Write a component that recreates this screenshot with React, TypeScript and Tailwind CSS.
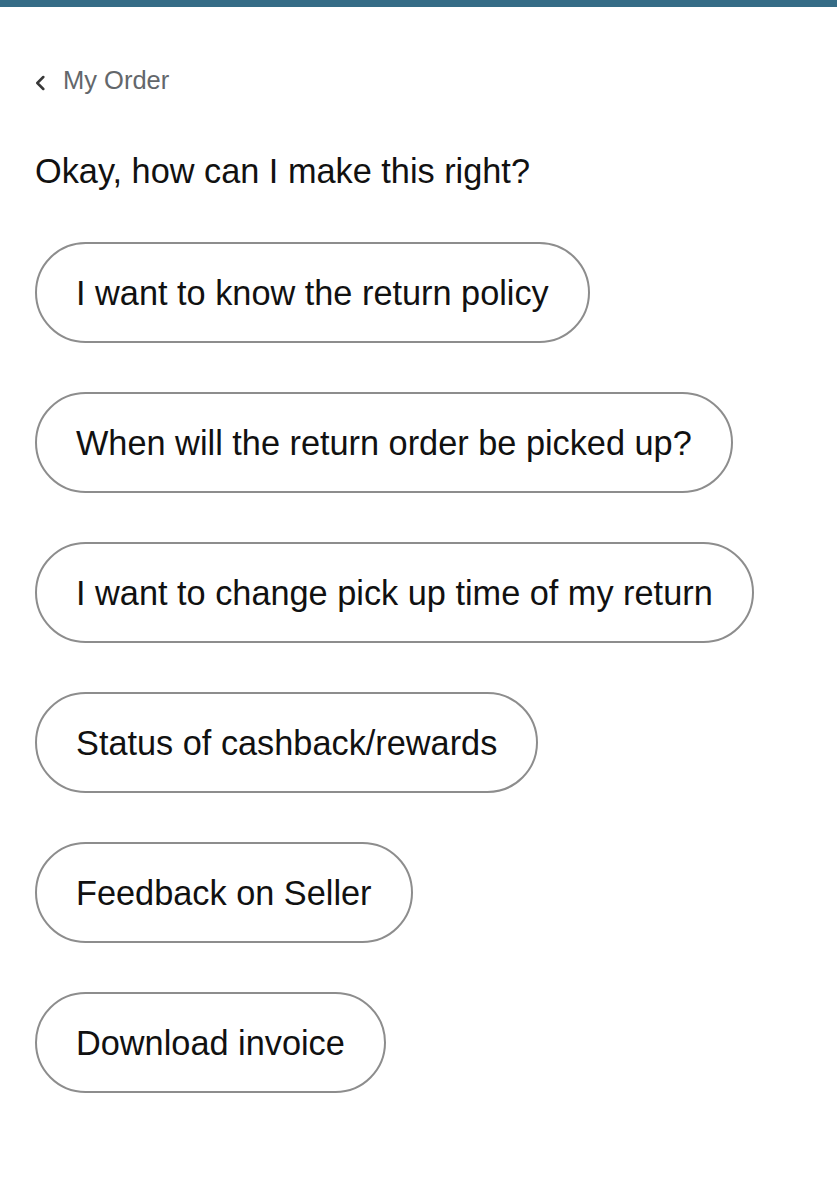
import React from "react";

const options = [
  "I want to know the return policy",
  "When will the return order be picked up?",
  "I want to change pick up time of my return",
  "Status of cashback/rewards",
  "Feedback on Seller",
  "Download invoice",
];

export default function App() {
  return (
    <div className="min-h-[1200px] w-[837px] bg-white font-['Liberation_Sans',Arial,sans-serif]">
      <div className="h-[7px] bg-[#356c86]" />
      <div className="pl-[35px]">
        <div className="mt-[58px] flex h-[30px] items-center gap-[18px]">
          <svg width="10" height="16" viewBox="0 0 10 16" className="mt-[6px]">
            <path d="M8.3 2 L2.3 8 L8.3 14" fill="none" stroke="#383838" strokeWidth="2.5" strokeLinecap="round" strokeLinejoin="round" />
          </svg>
          <span className="text-[25.5px] leading-[30px] text-[#63676b]">My Order</span>
        </div>
        <h1 className="mt-[56px] text-[34.3px] leading-[40px] text-[#111]">Okay, how can I make this right?</h1>
        <div className="mt-[51px] flex flex-col items-start gap-[49px]">
          {options.map((o) => (
            <button
              key={o}
              className="flex h-[101px] items-center rounded-full border-2 border-[#8d8d8d] bg-white px-[39px] text-[34.3px] leading-[40px] text-[#111]"
            >
              {o}
            </button>
          ))}
        </div>
      </div>
    </div>
  );
}
